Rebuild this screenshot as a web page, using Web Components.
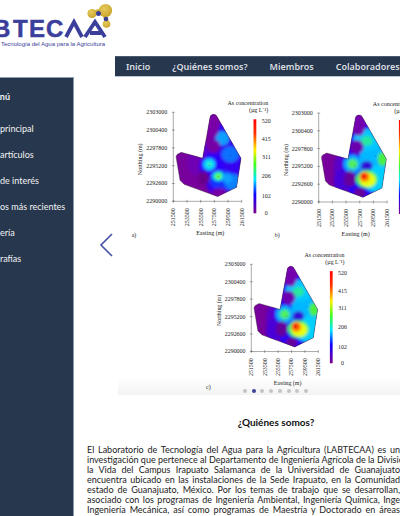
<!DOCTYPE html>
<html lang="es">
<head>
<meta charset="utf-8">
<title>LABTECAA</title>
<style>
  body { margin: 0; background: #fff; color: #222; font-family: Lato, "Liberation Sans", sans-serif; font-size: 9px; overflow-x: hidden; }
</style>
</head>
<body>
<lab-page>
  <lab-logo slot="logo"></lab-logo>
  <lab-sidebar slot="side" heading="enú">
    <a href="#">principal</a>
    <a href="#">artículos</a>
    <a href="#">de interés</a>
    <a href="#">os más recientes</a>
    <a href="#">ería</a>
    <a href="#">rafías</a>
  </lab-sidebar>
  <lab-nav slot="nav">
    <a href="#">Inicio</a>
    <a href="#">¿Quiénes somos?</a>
    <a href="#">Miembros</a>
    <a href="#">Colaboradores</a>
  </lab-nav>
  <lab-carousel><arsenic-maps></arsenic-maps></lab-carousel>
  <lab-about heading="¿Quiénes somos?">
    <span>El Laboratorio de Tecnología del Agua para la Agricultura (LABTECAA) es un</span>
    <span>investigación que pertenece al Departamento de Ingeniería Agrícola de la Divisió</span>
    <span>la Vida del Campus Irapuato Salamanca de la Universidad de Guanajuato</span>
    <span>encuentra ubicado en las instalaciones de la Sede Irapuato, en la Comunidad</span>
    <span>estado de Guanajuato, México. Por los temas de trabajo que se desarrollan,</span>
    <span>asociado con los programas de Ingeniería Ambiental, Ingeniería Química, Inge</span>
    <span>Ingeniería Mecánica, así como programas de Maestría y Doctorado en áreas</span>
  </lab-about>
</lab-page>
<script>
const define = (name, html, setup) => customElements.define(name, class extends HTMLElement {
  connectedCallback() {
    if (this.shadowRoot) return;
    const t = document.createElement('template');
    t.innerHTML = html;
    this.attachShadow({ mode: 'open' }).append(t.content.cloneNode(true));
    if (setup) setup(this);
  }
});
const setHeading = host => { host.shadowRoot.querySelector('h2').textContent = host.getAttribute('heading'); };

define('lab-page', `
<style>
  :host { display: grid; grid-template-columns: 74px minmax(0, 1fr); min-height: 100vh; }
  .left { display: flex; flex-direction: column; }
  .right { padding-top: 56px; }
  ::slotted(lab-sidebar) { flex: 1; }
</style>
<div class="left"><slot name="logo"></slot><slot name="side"></slot></div>
<main class="right"><slot name="nav"></slot><slot></slot></main>`);

define('lab-logo', `
<style>
  :host { display: block; height: 77px; }
  svg { display: block; overflow: visible; }
</style>
<svg width="114" height="56" viewBox="0 0 114 56" role="img" aria-label="LABTECAA">
  <defs><radialGradient id="g" cx=".4" cy=".35" r=".7"><stop offset="0" stop-color="#e6cb5c"/><stop offset="1" stop-color="#c9a227"/></radialGradient></defs>
  <path d="M92 13l11-3M104 12l3 11" stroke="#d0ae38" stroke-width="4"/>
  <circle cx="92" cy="13.5" r="4.600" fill="url(#g)"/>
  <circle cx="105.500" cy="10.500" r="6.600" fill="url(#g)"/>
  <circle cx="106.500" cy="24" r="3.800" fill="url(#g)"/>
  <circle cx="98.500" cy="13.500" r="2.500" fill="#3a3f95"/>
  <circle cx="106" cy="19" r="2.300" fill="#3a3f95"/>
  <text y="36.500" font-family="Liberation Sans, sans-serif" font-weight="700" font-size="24" fill="#3b3f9b" stroke="#3b3f9b" stroke-width=".5"><tspan x="-7">B</tspan><tspan x="13">T</tspan><tspan x="29">E</tspan><tspan x="46">C</tspan></text>
  <path d="M66 37L74 22L82 37M85 37L95 22L105 37M90 33H101" fill="none" stroke="#3b3f9b" stroke-width="3.800"/>
  <text x="1" y="46" font-family="Liberation Sans, sans-serif" font-size="6" fill="#3b3f9b">Tecnología del Agua para la Agricultura</text>
</svg>`);

define('lab-sidebar', `
<style>
  :host { display: block; box-sizing: border-box; background: #27374d; border-top: 1px solid #8e9bb0; border-right: 1px solid #8e9bb0; color: #f4f4f4; }
  h2 { margin: 0; padding: 14px 0 0; font-size: 9px; line-height: 10px; text-align: right; width: 10px; direction: rtl; white-space: nowrap; }
  nav { display: flex; flex-direction: column; padding-top: 14px; }
  ::slotted(a) { color: inherit; text-decoration: none; line-height: 26px; white-space: nowrap; }
</style>
<h2></h2>
<nav><slot></slot></nav>`, setHeading);

define('lab-nav', `
<style>
  :host { display: block; margin-left: 41px; background: #27374d; border-top: 1px solid #4a5a70; border-bottom: 1px solid #b9c6d6; overflow: hidden; }
  nav { display: flex; gap: 22px; padding-left: 11px; line-height: 19px; font-family: "Noto Sans", sans-serif; font-weight: 600; }
  ::slotted(a) { color: #dcdfe3; text-decoration: none; white-space: nowrap; }
</style>
<nav><slot></slot></nav>`);

define('lab-carousel', `
<style>
  :host { display: grid; grid-template-columns: 18px minmax(0, 1fr); gap: 0 8px; padding: 18px 0 0 18px; }
  .prev { align-self: center; padding: 0; border: 0; background: none; width: 24px; height: 26px; margin-left: 6px; }
  .prev svg { display: block; }
  .view { position: relative; height: 300px; overflow: hidden; background: linear-gradient(#fff 283px, #f3f3f3); }
  .dots { position: absolute; left: 125px; bottom: 2px; width: 65px; display: flex; justify-content: space-between; }
  .dots button { width: 4px; height: 4px; padding: 0; border: 0; border-radius: 50%; background: #c4c4c4; }
  .dots .on { background: #3c4498; }
</style>
<button class="prev" aria-label="Anterior"><svg width="16" height="26" viewBox="0 0 16 26"><path d="M14 2L3 13L14 24" fill="none" stroke="#4650a5" stroke-width="1.600"/></svg></button>
<div class="view"><slot></slot><div class="dots"></div></div>`, host => {
  const dots = host.shadowRoot.querySelector('.dots');
  for (let i = 0; i < 8; i++) {
    const b = document.createElement('button');
    b.setAttribute('aria-label', 'Imagen ' + (i + 1));
    if (i === 1) b.className = 'on';
    dots.append(b);
  }
});

/* Each spot: x, y, rx, ry, colour. */
const low = [
  [24,50,10,14,'#7000b4'],[57,55,28,36,'#3500f0'],[58,24,18,16,'#3000f0'],[38,54,12,12,'#2a00ff'],[50,68,14,10,'#1830ff'],
  [49,26,7,7,'#10a0ff'],[57,42,9,8,'#1070ff'],[60,70,9,8,'#1080ff'],[36,52,6,6,'#00d8ff'],[45,64,6,5,'#10e0e0'],[54,66,5,5,'#10a0ff'],
  [36,52,2,2,'#40ffa0'],[45,64,3,3,'#60ff30'],[40,34,7,7,'#7600a8'],[40,12,6,14,'#7a00a8'],[30,66,6,7,'#6a008c'],[46,81,8,5,'#7600a8'],[30,38,4,8,'#6000d0']
];
const high = [
  [24,55,9,16,'#5c00c8'],[52,52,29,42,'#2800f8'],[22,68,7,12,'#4800d8'],[59,46,18,34,'#00b8ff'],[49,27,14,11,'#00c8ff'],[58,66,15,13,'#00d0ff'],[34,51,9,9,'#00b0ff'],
  [48,28,6,5,'#28e8a0'],[64,46,5,7,'#48f040'],[34,51,5,5,'#50f060'],[38,34,7,7,'#6c00b0'],[40,10,7,13,'#7400b0'],[48,53,6,5,'#3010d8'],
  [48,66,11,9,'#40f060'],[49,67,8,7,'#e8ff10'],[46,64,5,5,'#ff8000'],[45,63,3,3,'#ff1000'],[31,66,6,8,'#66009c'],[41,80,6,5,'#66009c']
];
const yLabels = [2303000, 2300400, 2297800, 2295200, 2292600, 2290000];
const xLabels = [251500, 253500, 255500, 257500, 259500, 261500];
const scale = [[520, 9], [415, 27], [311, 45], [206, 64], [102, 84], [0, 101]];
const samples = [[17,48],[39,34],[42,12],[10,66],[30,66],[37,73],[45,64],[44,82],[36,53],[57,43]];
const panel = (spots, place) => `<g transform="${place}">
  <g clip-path="url(#zone)"><rect width="70" height="90" fill="#78009c"/><g filter="url(#soft)">
  ${spots.map(([x, y, rx, ry, c]) => `<ellipse cx="${x}" cy="${y}" rx="${rx}" ry="${ry}" fill="${c}"/>`).join('')}</g>
  ${samples.map(([x, y]) => `<circle cx="${x}" cy="${y}" r=".5" fill="#402040" opacity=".6"/>`).join('')}</g>
  <use href="#outline" fill="none" stroke="#333" stroke-width=".4"/>
  <path d="M0 0V89H68.400${yLabels.map((_, i) => `M-1.500 ${i * 17.8}h3`).join('')}${xLabels.map((_, i) => `M${i * 13.68} 87.500v3`).join('')}" fill="none" stroke="#555" stroke-width=".5"/>
  ${yLabels.map((v, i) => `<text x="-6" y="${i * 17.8 + 2}" text-anchor="end">${v}</text>`).join('')}
  ${xLabels.map((v, i) => `<text transform="translate(${i * 13.68 + 2} 96) rotate(-90)" text-anchor="end">${v}</text>`).join('')}
  <text transform="translate(-31 47) rotate(-90)" text-anchor="middle">Northing (m)</text>
  <text x="37" y="123" text-anchor="middle">Easting (m)</text>
  <text x="95" y="-7" text-anchor="end">As concentration</text>
  <text x="95" y="0" text-anchor="end">(µg L⁻¹)</text>
  <rect x="80.200" y="7" width="2.800" height="94" fill="url(#bar)"/>
  ${scale.map(([v, y]) => `<text x="93" y="${y + 2}" text-anchor="middle">${v}</text>`).join('')}
</g>`;
define('arsenic-maps', `
<style>
  :host { display: block; }
  svg { display: block; }
  text { font: 6px "Liberation Serif", serif; fill: #222; }
</style>
<svg width="350" height="300" viewBox="118 95 350 300" role="img" aria-label="As concentration">
  <defs>
    <path id="outline" d="M36.700 5.300Q37 2.500 40 2Q43 1.800 44 4.700L67.700 46L63.300 75L44.300 84.300L10.700 72L6.700 68L2.700 44.300L4 42L8 40L29.300 46Z"/>
    <clipPath id="zone"><use href="#outline"/></clipPath>
    <filter id="soft" x="-20%" y="-20%" width="140%" height="140%"><feGaussianBlur stdDeviation="1.800"/></filter>
    <linearGradient id="bar" x2="0" y2="1"><stop offset="0" stop-color="#f00"/><stop offset=".15" stop-color="#ff3000"/><stop offset=".33" stop-color="#fff000"/><stop offset=".48" stop-color="#40ff20"/><stop offset=".64" stop-color="#00e8ff"/><stop offset=".8" stop-color="#1000ff"/><stop offset="1" stop-color="#7c0090"/></linearGradient>
  </defs>
  ${panel(low, 'translate(173.3 112.3)')}
  ${panel(high, 'translate(318.7 113)')}
  ${panel(high, 'translate(251.3 264.3) scale(.98)')}
  <text x="131.700" y="237">a)</text><text x="274.700" y="237">b)</text><text x="206" y="389">c)</text>
</svg>`);

define('lab-about', `
<style>
  :host { display: block; padding: 19px 0 0 13px; overflow: hidden; }
  h2 { margin: 0 0 15px; font-size: 10px; line-height: 16px; text-align: center; color: #111; padding-left: 65px; }
  p { margin: 0; line-height: 10px; }
  ::slotted(span) { display: block; white-space: nowrap; text-align: justify; text-align-last: justify; }
</style>
<h2></h2>
<p><slot></slot></p>`, setHeading);
</script>
</body>
</html>
